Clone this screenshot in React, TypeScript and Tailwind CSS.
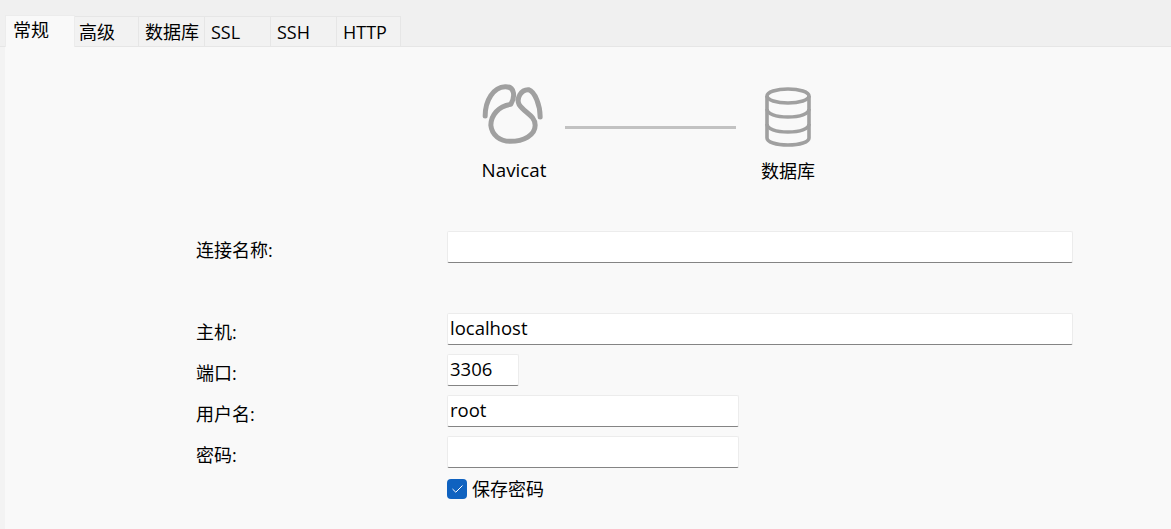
const font = "font-['Open_Sans','Noto_Sans_CJK_SC',sans-serif]";

const tabs = [
  { label: '高级', className: 'w-[64px] pl-[4px]' },
  { label: '数据库', className: 'w-[66px] pl-[6px]' },
  { label: 'SSL', className: 'w-[66px] pl-[6px]' },
  { label: 'SSH', className: 'w-[66px] pl-[6px]' },
  { label: 'HTTP', className: 'w-[64px] pl-[6px]' },
];

const NavicatLogo = () => (
  <svg width="67" height="65" viewBox="63 43 200 195" fill="none" stroke="#a0a0a0" strokeWidth="15" strokeLinecap="round" strokeLinejoin="round">
    <path d="M75 142C75 95 100 55 135 54C165 53 165 85 152 107C115 112 92 140 92 170C95 200 120 218 150 218C190 218 225 200 225 170C225 140 192 132 177 108C168 90 182 62 205 63C225 70 240 110 240 145" />
  </svg>
);

const DatabaseIcon = () => (
  <svg width="46" height="60" viewBox="0 0 46 60" fill="none" stroke="#a0a0a0" strokeWidth="3.6">
    <ellipse cx="23" cy="9" rx="21" ry="7" />
    <path d="M2 9V51C2 55 11 58 23 58C35 58 44 55 44 51V9" />
    <path d="M2 22C2 27 11 30 23 30C35 30 44 27 44 22" />
    <path d="M2 37C2 42 11 45 23 45C35 45 44 42 44 37" />
  </svg>
);

const Field = ({ label, value, width, className }: { label: string; value?: string; width: string; className?: string }) => (
  <div className={`flex items-center h-[32px] ${className ?? ''}`}>
    <div className="w-[251px] text-[18px] leading-[32px] pt-[6px] text-black">{label}</div>
    <div className={`${width} h-[32px] bg-white border border-[#ececec] border-b-[#848484] rounded-[2px] pl-[2px] text-[18.5px] leading-[28px] text-black`}>
      {value}
    </div>
  </div>
);

export default function App() {
  return (
    <div className={`w-[1171px] h-[529px] overflow-hidden flex flex-col bg-[#f3f3f3] ${font}`}>
      <div className="h-[47px] flex items-end pl-[5px] border-b border-[#e6e6e6] bg-[#f0f0f0]">
        <div className="relative -mb-px w-[70px] h-[32px] bg-[#f9f9f9] border-t border-x border-[#ececec] pl-[7px] text-[18px] leading-[29px] text-black">常规</div>
        {tabs.map((t) => (
          <div key={t.label} className={`${t.className} h-[30px] bg-[#f2f2f2] border-t border-r border-[#e6e6e6] text-[18px] leading-[30px] text-black whitespace-nowrap`}>
            {t.label}
          </div>
        ))}
      </div>
      <div className="ml-[5px] flex-1 bg-[#f9f9f9] pt-[36px]">
        <div className="flex items-start pl-[476px]">
          <div className="w-[66px] flex flex-col items-center">
            <NavicatLogo />
            <div className="mt-[10px] text-[18.8px] leading-[24px] text-black">Navicat</div>
          </div>
          <div className="ml-[18px] mt-[43px] w-[171px] h-[3px] bg-[#c2c2c2]" />
          <div className="ml-[22px] mt-[4px] w-[60px] flex flex-col items-center">
            <DatabaseIcon />
            <div className="mt-[12px] text-[18px] leading-[24px] text-black whitespace-nowrap">数据库</div>
          </div>
        </div>
        <div className="pl-[191px] pt-[48px] flex flex-col">
          <Field label="连接名称:" width="w-[626px]" />
          <Field label="主机:" value="localhost" width="w-[626px]" className="mt-[50px]" />
          <Field label="端口:" value="3306" width="w-[72px]" className="mt-[9px]" />
          <Field label="用户名:" value="root" width="w-[292px]" className="mt-[9px]" />
          <Field label="密码:" width="w-[292px]" className="mt-[9px]" />
          <div className="ml-[251px] mt-[10px] flex items-center gap-[5px]">
            <div className="w-[20px] h-[20px] rounded-[4px] bg-[#0f62c0] flex items-center justify-center">
              <svg width="11" height="8" viewBox="0 0 11 8" fill="none" stroke="#fff" strokeWidth="1">
                <path d="M0.5 4L3.8 7.2L10.5 0.5" />
              </svg>
            </div>
            <span className="text-[18px] leading-[22px] text-black">保存密码</span>
          </div>
        </div>
      </div>
    </div>
  );
}
